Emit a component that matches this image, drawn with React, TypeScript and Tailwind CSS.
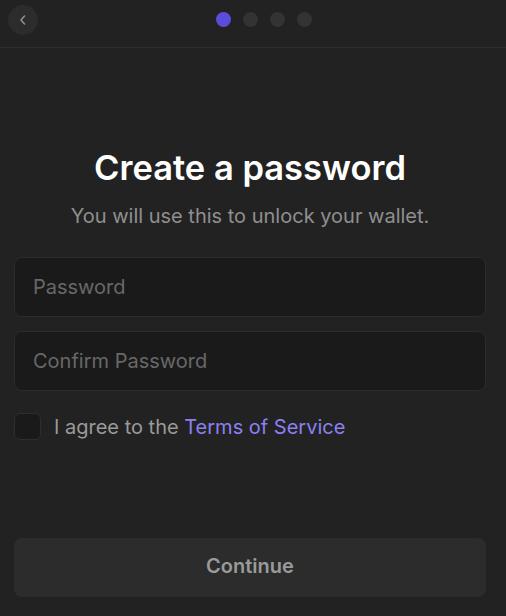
import React, { useState } from "react";

const steps = [true, false, false, false];

export default function App() {
  const [agreed, setAgreed] = useState(false);

  return (
    <div
      className="flex h-screen w-full flex-col bg-[#222222] text-white"
      style={{ fontFamily: "Inter, 'Noto Sans', sans-serif" }}
    >
      {/* header */}
      <div className="relative flex h-[48px] shrink-0 items-start border-b border-[#2e2e2e]">
        <button
          type="button"
          className="ml-[8px] mt-[5px] flex h-[30px] w-[30px] items-center justify-center rounded-full bg-[#2c2c2c] text-[#8e8e8e]"
        >
          <svg width="10" height="12" viewBox="0 0 10 12" fill="none">
            <path d="M6.5 2 L3 6 L6.5 10" stroke="currentColor" strokeWidth="1.6" strokeLinecap="round" strokeLinejoin="round" />
          </svg>
        </button>
        <div className="absolute left-[216px] top-[12px] flex gap-[12px]">
          {steps.map((active, i) => (
            <span
              key={i}
              className={`block h-[15px] w-[15px] rounded-full ${active ? "bg-[#5a4ddc]" : "bg-[#333333]"}`}
            />
          ))}
        </div>
      </div>

      {/* body */}
      <div className="flex w-[500px] flex-1 flex-col px-[14px]">
        <h1 className="mt-[100px] text-center text-[34.5px] font-semibold leading-[40px] text-white">
          Create a password
        </h1>
        <p className="mt-[15px] text-center text-[20px] leading-[26px] text-[#8f8f8f]">
          You will use this to unlock your wallet.
        </p>

        <div className="mt-[28px] flex flex-col gap-[14px]">
          <input
            type="password"
            placeholder="Password"
            className="h-[60px] w-full rounded-[8px] border border-[#2c2c2c] bg-[#1a1a1a] px-[18px] text-[20px] text-white outline-none placeholder:text-[#686868]"
          />
          <input
            type="password"
            placeholder="Confirm Password"
            className="h-[60px] w-full rounded-[8px] border border-[#2c2c2c] bg-[#1a1a1a] px-[18px] text-[20px] text-white outline-none placeholder:text-[#686868]"
          />
        </div>

        <label className="mt-[22px] flex items-center gap-[13px]">
          <button
            type="button"
            onClick={() => setAgreed(!agreed)}
            className={`h-[27px] w-[27px] rounded-[6px] border border-[#2e2e2e] ${agreed ? "bg-[#5a4ddc]" : "bg-[#1a1a1a]"}`}
          />
          <span className="text-[20px] leading-[26px] text-[#9a9a9a]">
            I agree to the <span className="text-[#8a80f2]">Terms of Service</span>
          </span>
        </label>

        <div className="flex-1" />

        <button
          type="button"
          className="mb-[19px] flex h-[59px] w-full items-center justify-center rounded-[8px] bg-[#2c2c2c] pb-[3px] text-[20px] font-semibold leading-[24px] text-[#9a9a9a]"
        >
          Continue
        </button>
      </div>
    </div>
  );
}
